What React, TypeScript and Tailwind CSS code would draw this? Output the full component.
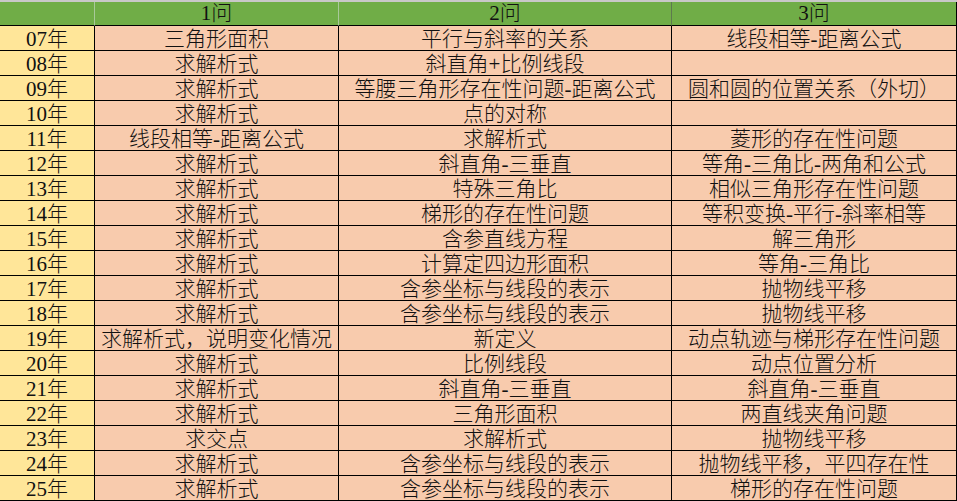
const rows: [string, string, string, string][] = [
  ['07年', '三角形面积', '平行与斜率的关系', '线段相等-距离公式'],
  ['08年', '求解析式', '斜直角+比例线段', ''],
  ['09年', '求解析式', '等腰三角形存在性问题-距离公式', '圆和圆的位置关系（外切）'],
  ['10年', '求解析式', '点的对称', ''],
  ['11年', '线段相等-距离公式', '求解析式', '菱形的存在性问题'],
  ['12年', '求解析式', '斜直角-三垂直', '等角-三角比-两角和公式'],
  ['13年', '求解析式', '特殊三角比', '相似三角形存在性问题'],
  ['14年', '求解析式', '梯形的存在性问题', '等积变换-平行-斜率相等'],
  ['15年', '求解析式', '含参直线方程', '解三角形'],
  ['16年', '求解析式', '计算定四边形面积', '等角-三角比'],
  ['17年', '求解析式', '含参坐标与线段的表示', '抛物线平移'],
  ['18年', '求解析式', '含参坐标与线段的表示', '抛物线平移'],
  ['19年', '求解析式，说明变化情况', '新定义', '动点轨迹与梯形存在性问题'],
  ['20年', '求解析式', '比例线段', '动点位置分析'],
  ['21年', '求解析式', '斜直角-三垂直', '斜直角-三垂直'],
  ['22年', '求解析式', '三角形面积', '两直线夹角问题'],
  ['23年', '求交点', '求解析式', '抛物线平移'],
  ['24年', '求解析式', '含参坐标与线段的表示', '抛物线平移，平四存在性'],
  ['25年', '求解析式', '含参坐标与线段的表示', '梯形的存在性问题'],
];

const App = () => {
  return (
    <div
      className="w-[957px] h-[501px] overflow-hidden bg-white text-[21px] font-light leading-none text-[#111]"
      style={{ fontFamily: '"Liberation Serif", "Noto Sans CJK SC", serif' }}
    >
      <div className="grid grid-cols-[95px_244px_333px_285px] h-[26px] border-t-2 border-[#c8c8c8] bg-[#70ad47]">
        <div className="border-r border-b border-r-[#a9c99a] border-b-black" />
        <div className="flex items-center justify-center border-r border-b border-r-[#a9c99a] border-b-black">1问</div>
        <div className="flex items-center justify-center border-r border-b border-r-[#5d7a4e] border-b-black">2问</div>
        <div className="flex items-center justify-center border-r border-b border-r-black border-b-black">3问</div>
      </div>
      {rows.map((r) => (
        <div key={r[0]} className="grid grid-cols-[95px_244px_333px_285px] h-[25px]">
          <div className="flex items-center justify-center bg-[#ffe699] border-r border-b border-black pt-[2px]">{r[0]}</div>
          <div className="flex items-center justify-center bg-[#f8cbad] border-r border-b border-black pt-[2px] whitespace-nowrap">{r[1]}</div>
          <div className="flex items-center justify-center bg-[#f8cbad] border-r border-b border-black pt-[2px] whitespace-nowrap">{r[2]}</div>
          <div className="flex items-center justify-center bg-[#f8cbad] border-r border-b border-black pt-[2px] whitespace-nowrap">{r[3]}</div>
        </div>
      ))}
    </div>
  );
};

export default App;
